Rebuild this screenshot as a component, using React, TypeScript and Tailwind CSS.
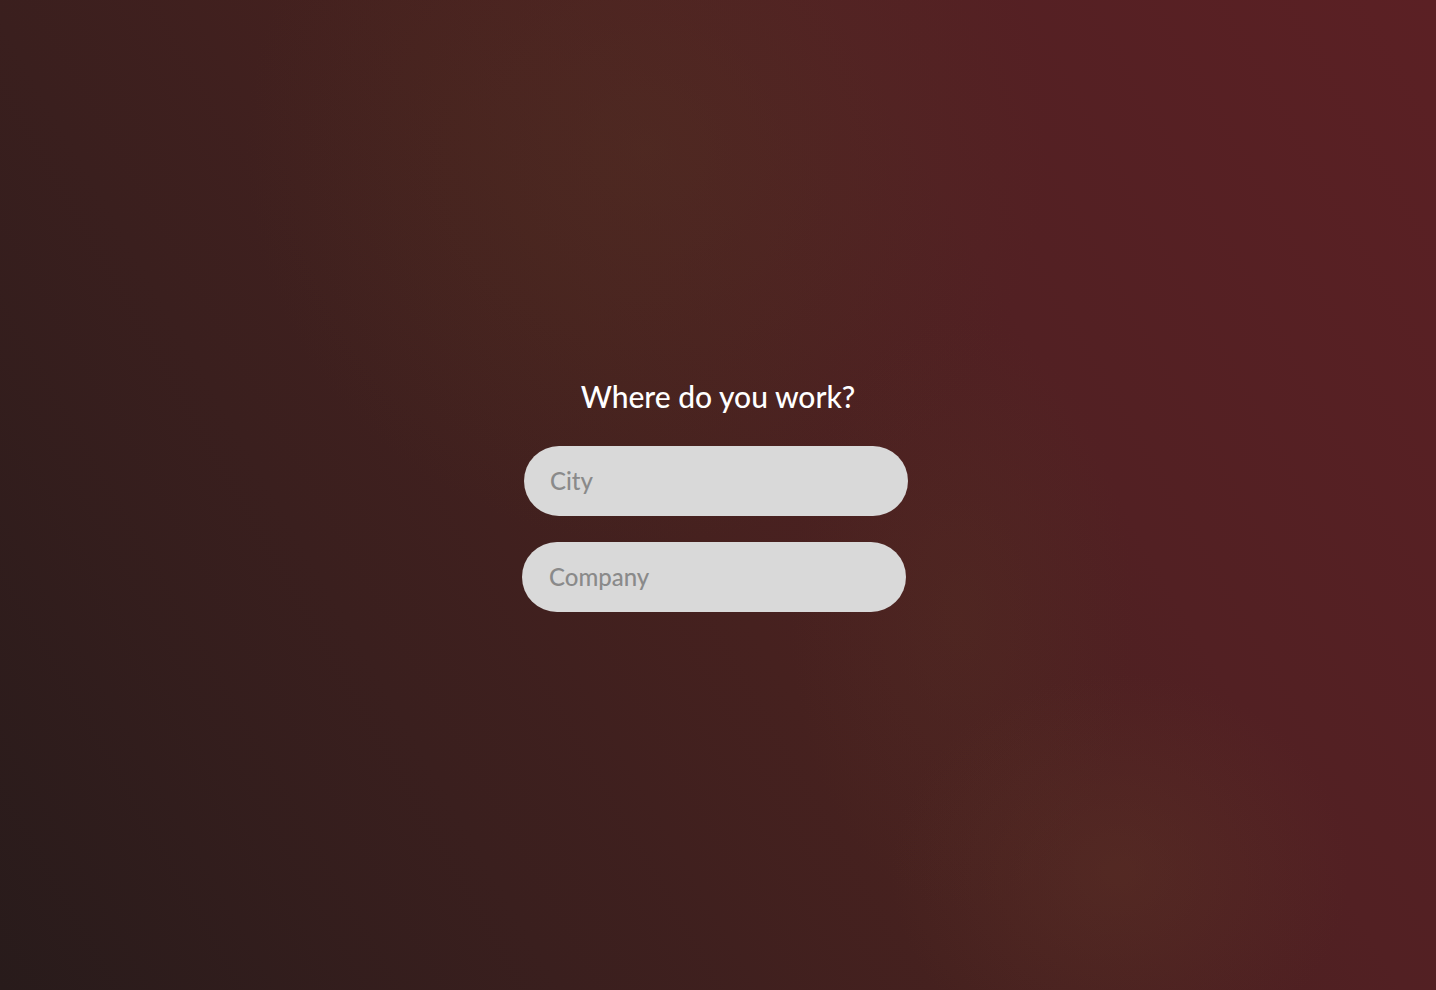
export default function App() {
  return (
    <div className="flex min-h-screen w-full items-center justify-center bg-[radial-gradient(ellipse_28%_40%_at_45%_15%,rgba(85,55,35,0.35),transparent),radial-gradient(ellipse_16%_20%_at_78%_88%,rgba(100,60,40,0.3),transparent),radial-gradient(ellipse_12%_30%_at_67%_62%,rgba(85,50,35,0.3),transparent),linear-gradient(60deg,#281b1b_0%,#3a1f1e_28%,#46211f_48%,#522023_70%,#5b2024_100%)] font-['Lato','Noto_Sans',sans-serif]">
      <div className="flex flex-col items-center">
        <h1 className="text-[30px] leading-[34px] font-medium text-white">
          Where do you work?
        </h1>
        <div className="mt-[33px] flex flex-col pr-[6px]">
          <input
            placeholder="City"
            className="ml-[2px] h-[70px] w-[384px] rounded-full bg-[#d9d9d9] px-[26px] text-[24px] font-medium text-neutral-700 outline-none placeholder:text-[#8a8a8a]"
          />
          <input
            placeholder="Company"
            className="mt-[26px] h-[70px] w-[384px] rounded-full bg-[#d9d9d9] px-[27px] text-[24px] font-medium text-neutral-700 outline-none placeholder:text-[#8a8a8a]"
          />
        </div>
      </div>
    </div>
  );
}
